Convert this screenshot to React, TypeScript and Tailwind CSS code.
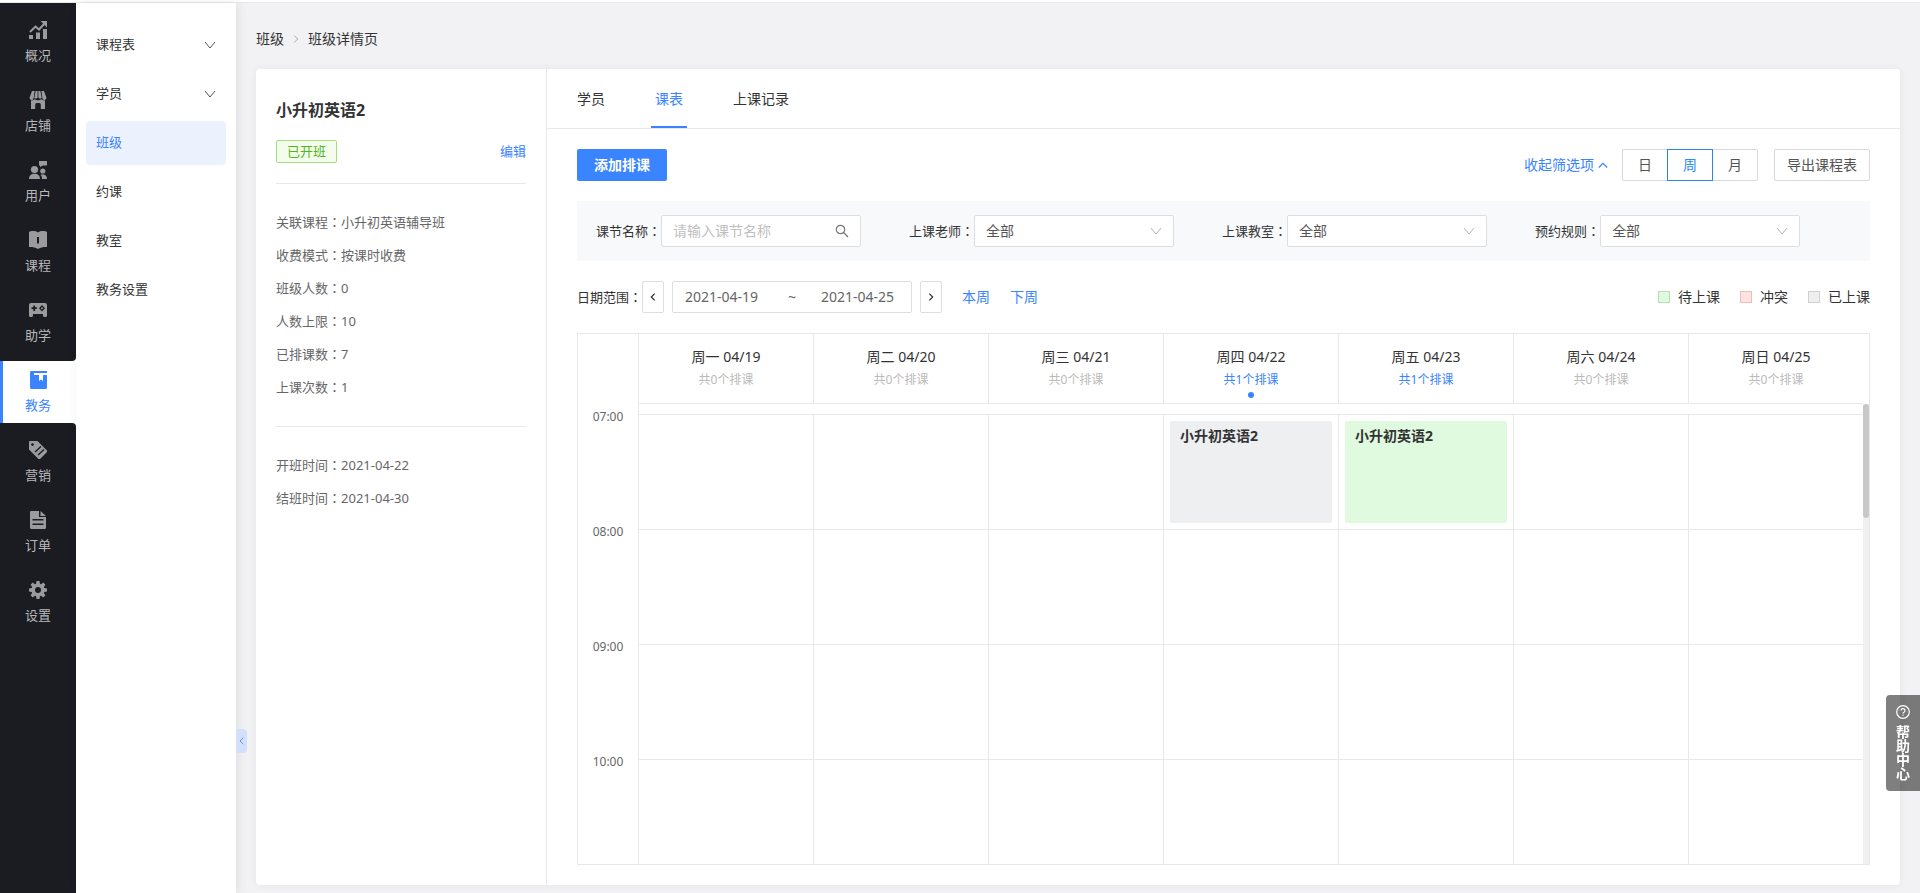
import type { ReactNode } from 'react';

const icons: Record<string, ReactNode> = {
  overview: (
    <>
      <path d="M0 14h4v4H0zM7 11.500h4V18H7zM14 8h4v10h-4z" />
      <path d="M1 11l5.500-5.500 3.500 3L16 2" fill="none" stroke="currentColor" strokeWidth="2" />
      <path d="M11.500 0H18v6.500z" />
    </>
  ),
  shop: (
    <>
      <path d="M3 0h2.600l-1 7.200a2 2 0 0 1-4-.6zM6.600 0h2v6.400a2 2 0 0 1-3.300.5zM9.400 0h2l1.300 6.900a2 2 0 0 1-3.300-.5zM12.400 0H15l2.400 6.600a2 2 0 0 1-4 .6z" />
      <path d="M2 9.300c1.300.3 2.600-.1 3.500-1 1.900 1.400 5.100 1.400 7 0 .9.900 2.200 1.300 3.500 1V18h-4.200v-4.500a1.500 1.500 0 0 0-1.500-1.500H7.700a1.500 1.500 0 0 0-1.500 1.500V18H2z" />
    </>
  ),
  user: (
    <>
      <circle cx="5.5" cy="8.5" r="3.6" />
      <path d="M0 18c0-3 1.500-4.600 4-5.200h3c2.500.6 4 2.200 4 5.200zM10 0h8v4.400h-4l-3 1.600V4.400h-1z" />
      <circle cx="13.800" cy="10" r="2.600" />
      <path d="M11.500 13.500h3.500c2 .6 3 2.200 3 4.500h-5c0-1.800-.5-3.200-1.500-4.500z" />
    </>
  ),
  course: (
    <path
      fillRule="evenodd"
      d="M1 .5C4-.3 7 .2 9 1.500 11 .2 14-.3 17 .5a1 1 0 0 1 1 1V16c-3-.2-6 .3-9 2-3-1.700-6-2.200-9-2V1.500a1 1 0 0 1 1-1zM8 6v6.500h2V6z"
    />
  ),
  assist: (
    <path
      fillRule="evenodd"
      d="M2 2h14a2 2 0 0 1 2 2v10.500A1.500 1.500 0 0 1 16.500 16h-1a1.500 1.500 0 0 1-1.500-1.500V13H4v1.500A1.500 1.500 0 0 1 2.500 16h-1A1.500 1.500 0 0 1 0 14.500V4a2 2 0 0 1 2-2zM4.300 4.500v1.800H2.500v1.800h1.800v1.800h1.800V8.100h1.800V6.300H6.100V4.500zM13 4l-3 3.200 3 3.200 3-3.200zm0 2l1.200 1.200L13 8.400l-1.200-1.200z"
    />
  ),
  teaching: (
    <path d="M2 0h16v2H5v2h5v6l2-1.500L14 10V4h4v12.500A1.500 1.500 0 0 1 16.500 18h-14A1.500 1.500 0 0 1 1 16.500V1.500A1.500 1.500 0 0 1 2 0z" />
  ),
  marketing: (
    <>
      <path
        fillRule="evenodd"
        d="M1 0h7.500L18 9.500a1.300 1.300 0 0 1 0 1.500l-7 7a1.300 1.300 0 0 1-1.500 0L0 8.500V1a1 1 0 0 1 1-1zM3.500 2.200a1.400 1.400 0 1 0 0 2.800 1.400 1.400 0 0 0 0-2.800z"
      />
      <path d="M6 11l6-5.500M9 14l6-5.500" stroke="#1b1c21" strokeWidth="1.4" />
    </>
  ),
  order: (
    <path
      fillRule="evenodd"
      d="M2 0h8v6h7v10.500a1.500 1.500 0 0 1-1.500 1.500h-13A1.500 1.500 0 0 1 1 16.500V1a1 1 0 0 1 1-1zM11.500 0L17 5h-5.500zM3.500 8v1.600h11V8zm0 4.500v1.600h11v-1.600z"
    />
  ),
  setting: (
    <path
      fillRule="evenodd"
      d="M7.500 0h3l.4 2.700 1.200.5L14.300 1.600l2.100 2.100-1.600 2.200.5 1.200 2.700.4v3l-2.700.4-.5 1.200 1.600 2.200-2.100 2.100-2.200-1.600-1.200.5-.4 2.700h-3l-.4-2.700-1.200-.5-2.200 1.600-2.100-2.100 1.600-2.200-.5-1.200L0 10.500v-3l2.700-.4.5-1.200-1.600-2.200 2.100-2.100 2.200 1.600 1.200-.5zM9 6a3 3 0 1 0 0 6 3 3 0 0 0 0-6z"
    />
  ),
};

interface MainItem {
  icon: string;
  text: string;
}

const itemsBefore: MainItem[] = [
  { icon: 'overview', text: '概况' },
  { icon: 'shop', text: '店铺' },
  { icon: 'user', text: '用户' },
  { icon: 'course', text: '课程' },
  { icon: 'assist', text: '助学' },
];

const itemsAfter: MainItem[] = [
  { icon: 'marketing', text: '营销' },
  { icon: 'order', text: '订单' },
  { icon: 'setting', text: '设置' },
];

const subItems = [
  { text: '课程表', expandable: true },
  { text: '学员', expandable: true },
  { text: '班级', active: true },
  { text: '约课' },
  { text: '教室' },
  { text: '教务设置' },
];

const classInfo = [
  ['关联课程', '小升初英语辅导班'],
  ['收费模式', '按课时收费'],
  ['班级人数', '0'],
  ['人数上限', '10'],
  ['已排课数', '7'],
  ['上课次数', '1'],
];

const classDates = [
  ['开班时间', '2021-04-22'],
  ['结班时间', '2021-04-30'],
];

const days = [
  { name: '周一 04/19', count: 0 },
  { name: '周二 04/20', count: 0 },
  { name: '周三 04/21', count: 0 },
  { name: '周四 04/22', count: 1, today: true },
  { name: '周五 04/23', count: 1 },
  { name: '周六 04/24', count: 0 },
  { name: '周日 04/25', count: 0 },
];

const hours = ['07:00', '08:00', '09:00', '10:00'];

const lessons = [
  { day: 3, hour: '07:00', name: '小升初英语2', color: 'bg-[#eeeff1]' },
  { day: 4, hour: '07:00', name: '小升初英语2', color: 'bg-[#dffadf]' },
];

const legend = [
  { text: '待上课', color: 'bg-[#dffadf] border-[#b5dfb5]' },
  { text: '冲突', color: 'bg-[#ffe2e2] border-[#efbcbc]' },
  { text: '已上课', color: 'bg-[#eeeeee] border-[#d0d0d0]' },
];

// Full-width colon, centred in its box
function Colon() {
  return <span className="font-['Noto_Sans_CJK_TC',sans-serif]">：</span>;
}

interface ChevronProps {
  className?: string;
  d?: string;
}

function Chevron({ className, d = 'M1 3l5 6 5-6' }: ChevronProps) {
  return (
    <svg className={className} viewBox="0 0 12 12" fill="none" stroke="currentColor" aria-hidden="true">
      <path d={d} />
    </svg>
  );
}

function MainNavItem({ item, active }: { item: MainItem; active?: boolean }) {
  return (
    <a
      href="#"
      className={
        active
          ? 'flex h-[62px] flex-col items-center border-l-[3px] border-[#3a84ff] bg-white pr-[3px] pt-[10px] text-[#3a84ff]'
          : 'flex h-[62px] flex-col items-center pt-[10px] text-[#9b9b9e]'
      }
    >
      <svg className="h-[18px] w-[18px]" viewBox="0 0 18 18" fill="currentColor" aria-hidden="true">
        {icons[item.icon]}
      </svg>
      <span className={active ? 'mt-[7px] text-[13px] leading-[18px]' : 'mt-[7px] text-[13px] leading-[18px] text-[#b8b8bb]'}>
        {item.text}
      </span>
    </a>
  );
}

function MainNav() {
  return (
    <nav className="flex w-[76px] shrink-0 flex-col bg-white">
      <div className="flex flex-col gap-2 rounded-br bg-[#1b1c21] py-2">
        {itemsBefore.map((item) => (
          <MainNavItem key={item.icon} item={item} />
        ))}
      </div>
      <MainNavItem item={{ icon: 'teaching', text: '教务' }} active />
      <div className="flex flex-1 flex-col gap-2 rounded-tr bg-[#1b1c21] py-2">
        {itemsAfter.map((item) => (
          <MainNavItem key={item.icon} item={item} />
        ))}
      </div>
    </nav>
  );
}

function SubNav() {
  return (
    <nav className="relative w-40 shrink-0 bg-white px-[10px] pt-5 shadow-[2px_0_10px_rgba(0,0,0,0.08)]">
      <ul className="flex flex-col gap-[5px]">
        {subItems.map((item) => (
          <li key={item.text}>
            <a
              href="#"
              className={
                item.active
                  ? 'flex h-11 items-center justify-between rounded bg-[#ebf2fe] px-[10px] text-[#3a84ff]'
                  : 'flex h-11 items-center justify-between px-[10px] text-[#333333]'
              }
            >
              {item.text}
              {item.expandable && <Chevron className="h-3 w-3 text-[#555555]" />}
            </a>
          </li>
        ))}
      </ul>
      <button
        aria-label="收起菜单"
        className="absolute bottom-[140px] left-full flex h-6 w-[11px] items-center justify-center rounded-r bg-[#d3e0fb] text-[#3a6fe0]"
      >
        <Chevron className="h-2 w-2" d="M8 1L3 6l5 5" />
      </button>
    </nav>
  );
}

function InfoList({ rows }: { rows: string[][] }) {
  return (
    <ul className="text-[#666666]">
      {rows.map(([label, value]) => (
        <li key={label} className="h-[33px] leading-8">
          {label}
          <Colon />
          {value}
        </li>
      ))}
    </ul>
  );
}

function ClassPanel() {
  return (
    <aside className="w-[291px] shrink-0 border-r border-[#e8e8ea] px-5 pt-[30px]">
      <h1 className="text-base leading-[22px] font-bold text-[#333333]">小升初英语2</h1>
      <div className="mt-[19px] flex items-center justify-between border-b border-[#e8e8ea] pb-5">
        <span className="rounded-xs border border-[#a5e07e] bg-[#f4fdec] px-[10px] leading-[21px] text-[#52b51c]">
          已开班
        </span>
        <a href="#" className="text-[#3a84ff]">
          编辑
        </a>
      </div>
      <div className="border-b border-[#e8e8ea] py-[22px]">
        <InfoList rows={classInfo} />
      </div>
      <div className="pt-[22px]">
        <InfoList rows={classDates} />
      </div>
    </aside>
  );
}

function Tabs() {
  return (
    <div role="tablist" className="flex h-[60px] gap-[42px] border-b border-[#e8e8ea] pl-[26px] text-sm text-[#333333]">
      <button role="tab" className="border-b-2 border-transparent px-1 pt-[2px]">
        学员
      </button>
      <button role="tab" aria-selected="true" className="border-b-2 border-[#3a84ff] px-1 pt-[2px] text-[#3a84ff]">
        课表
      </button>
      <button role="tab" className="border-b-2 border-transparent px-1 pt-[2px]">
        上课记录
      </button>
    </div>
  );
}

function Toolbar() {
  return (
    <div className="flex items-center text-sm">
      <button className="h-8 w-[90px] rounded-xs bg-[#3a84ff] font-bold text-white">添加排课</button>
      <button className="ml-auto flex items-center gap-1 text-[#3a84ff]">
        收起筛选项
        <Chevron className="h-[10px] w-[10px] stroke-[1.5]" d="M1 9l5-5 5 5" />
      </button>
      <div className="ml-[14px] flex text-[#555555]">
        <button className="h-8 w-[45px] rounded-l-xs border border-r-0 border-[#d9d9d9]">日</button>
        <button aria-pressed="true" className="h-8 w-[46px] border border-[#2b85e4] text-[#2b8cf0]">
          周
        </button>
        <button className="h-8 w-[45px] rounded-r-xs border border-l-0 border-[#d9d9d9]">月</button>
      </div>
      <button className="ml-4 h-8 w-24 rounded-xs border border-[#d9d9d9] text-[#555555]">导出课程表</button>
    </div>
  );
}

function FilterSelect({ id, label }: { id: string; label: string }) {
  return (
    <div className="flex items-center">
      <label htmlFor={id}>
        {label}
        <Colon />
      </label>
      <div className="relative">
        <select
          id={id}
          className="h-8 w-[200px] appearance-none rounded-xs border border-[#dcdee0] bg-white px-[11px] text-sm text-[#555555]"
        >
          <option>全部</option>
        </select>
        <Chevron className="pointer-events-none absolute top-[10px] right-3 h-3 w-3 text-[#b5b5b5]" />
      </div>
    </div>
  );
}

function Filters() {
  return (
    <div className="mt-5 flex h-[60px] items-center gap-12 bg-[#f7f9fb] pl-[19px] text-[#333333]">
      <div className="flex items-center">
        <label htmlFor="lesson-name">
          课节名称
          <Colon />
        </label>
        <div className="flex h-8 w-[200px] items-center rounded-xs border border-[#dcdee0] bg-white px-[11px]">
          <input
            id="lesson-name"
            placeholder="请输入课节名称"
            className="min-w-0 flex-1 text-sm outline-none placeholder:text-[#bfbfbf]"
          />
          <svg className="h-[14px] w-[14px] text-[#777777]" viewBox="0 0 14 14" fill="none" stroke="currentColor" strokeWidth="1.2" aria-hidden="true">
            <circle cx="5.5" cy="5.5" r="4.2" />
            <path d="M8.500 8.500L13 13" />
          </svg>
        </div>
      </div>
      <FilterSelect id="teacher" label="上课老师" />
      <FilterSelect id="room" label="上课教室" />
      <FilterSelect id="rule" label="预约规则" />
    </div>
  );
}

function DateRange() {
  return (
    <div className="mt-5 flex items-center text-sm">
      <span className="text-[13px] text-[#333333]">
        日期范围
        <Colon />
      </span>
      <button
        aria-label="上一周"
        className="flex h-8 w-[22px] items-center justify-center rounded-xs border border-[#dcdee0] text-[#333333]"
      >
        <Chevron className="h-[10px] w-[10px] stroke-[1.5]" d="M8 2L4 6l4 4" />
      </button>
      <div className="mx-2 flex h-8 w-60 items-center justify-between rounded-xs border border-[#dcdee0] px-3 text-[#666666]">
        <input aria-label="开始日期" readOnly value="2021-04-19" className="w-[78px] outline-none" />
        <span>~</span>
        <input aria-label="结束日期" readOnly value="2021-04-25" className="w-[78px] outline-none" />
      </div>
      <button
        aria-label="下一周"
        className="flex h-8 w-[22px] items-center justify-center rounded-xs border border-[#dcdee0] text-[#333333]"
      >
        <Chevron className="h-[10px] w-[10px] stroke-[1.5]" d="M4 2l4 4-4 4" />
      </button>
      <a href="#" className="ml-5 text-[#3a84ff]">
        本周
      </a>
      <a href="#" className="ml-5 text-[#3a84ff]">
        下周
      </a>
      <ul className="ml-auto flex gap-5 text-[#333333]">
        {legend.map((item) => (
          <li key={item.text} className="flex items-center gap-2">
            <span className={`h-3 w-3 border ${item.color}`} />
            {item.text}
          </li>
        ))}
      </ul>
    </div>
  );
}

function Calendar() {
  return (
    <table className="mt-5 w-full table-fixed border-separate border-spacing-0 border border-[#e8e8ea]">
      <colgroup>
        <col className="w-[60px]" />
        {days.map((day) => (
          <col key={day.name} />
        ))}
        <col className="w-[6px]" />
      </colgroup>
      <thead>
        <tr>
          <td className="h-[70px]" />
          {days.map((day) => (
            <th
              key={day.name}
              className="h-[70px] border-b border-l border-[#e8e8ea] pt-3 align-top font-normal text-[#333333]"
            >
              <div className="text-sm leading-[22px]">{day.name}</div>
              <div className={day.count > 0 ? 'text-xs leading-6 text-[#3a84ff]' : 'text-xs leading-6 text-[#bbbbbb]'}>
                共{day.count}个排课
              </div>
              {day.today && <div className="mx-auto h-[6px] w-[6px] rounded-full bg-[#3a84ff]" />}
            </th>
          ))}
          <td />
        </tr>
      </thead>
      <tbody>
        <tr>
          <td className="h-[10px]" />
          <td colSpan={7} className="border-l border-[#e8e8ea]" />
          <td rowSpan={5} className="bg-[#f0f0f0] align-top">
            <div className="h-[114px] rounded-full bg-[#c8c8c8]" />
          </td>
        </tr>
        {hours.map((hour, index) => (
          <tr key={hour} className={index === hours.length - 1 ? 'h-[105px]' : 'h-[115px]'}>
            <th className="align-top text-xs font-normal text-[#666666]">
              <div className="-mt-[9px] leading-6">{hour}</div>
            </th>
            {days.map((day, dayIndex) => {
              const lesson = lessons.find((l) => l.day === dayIndex && l.hour === hour);
              return (
                <td key={day.name} className="border-t border-l border-[#e8e8ea] p-[6px] align-top">
                  {lesson && (
                    <div className={`h-[102px] rounded-xs px-[10px] pt-1 text-sm leading-[22px] font-bold text-[#333333] ${lesson.color}`}>
                      {lesson.name}
                    </div>
                  )}
                </td>
              );
            })}
          </tr>
        ))}
      </tbody>
    </table>
  );
}

function HelpButton() {
  return (
    <button className="fixed right-0 bottom-[102px] flex h-24 w-[34px] flex-col items-center rounded-l bg-black/50 pt-[10px] text-white">
      <svg className="h-[14px] w-[14px]" viewBox="0 0 14 14" fill="none" stroke="currentColor" strokeWidth="1.2" aria-hidden="true">
        <circle cx="7" cy="7" r="6.3" />
        <path d="M5 5.600a2 2 0 1 1 2.800 1.800c-.5.2-.8.5-.8 1.200M7 9.600v1.200" />
      </svg>
      <span className="mt-[6px] w-[14px] text-sm leading-[14px] font-bold break-all">帮助中心</span>
    </button>
  );
}

export default function App() {
  return (
    <div className="flex min-h-screen flex-col bg-[#f2f2f5] font-['Noto_Sans','Noto_Sans_CJK_SC',sans-serif] text-[13px]">
      <div className="h-[3px] border-b border-[#e8e8ea] bg-white" />
      <div className="flex flex-1">
        <MainNav />
        <SubNav />
        <main className="flex min-w-0 flex-1 flex-col px-5 pb-2">
          <div className="flex h-[66px] items-center pt-[6px] text-sm text-[#333333]">
            <a href="#">班级</a>
            <Chevron className="mx-[7px] h-[10px] w-[10px] text-[#999999]" d="M4 2l4 4-4 4" />
            <span>班级详情页</span>
          </div>
          <div className="flex flex-1 rounded bg-white shadow-[0_0_8px_rgba(0,0,0,0.06)]">
            <ClassPanel />
            <section className="min-w-0 flex-1">
              <Tabs />
              <div className="px-[30px] py-5">
                <Toolbar />
                <Filters />
                <DateRange />
                <Calendar />
              </div>
            </section>
          </div>
        </main>
      </div>
      <HelpButton />
    </div>
  );
}
